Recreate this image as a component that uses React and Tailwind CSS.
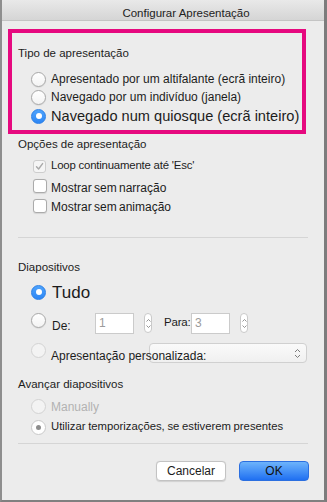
import React from "react";

function Radio({ v = "off", className = "" }) {
  if (v === "on")
    return (
      <div className={`w-[15px] h-[15px] shrink-0 rounded-full bg-linear-to-b from-[#4ea3fc] to-[#2d86f4] border border-[#2a7fe6] flex items-center justify-center ${className}`}>
        <div className="w-[6px] h-[6px] rounded-full bg-white" />
      </div>
    );
  if (v === "dis")
    return <div className={`w-[15px] h-[15px] shrink-0 rounded-full border border-[#d3d3d3] bg-[#f3f3f3] ${className}`} />;
  if (v === "dison")
    return (
      <div className={`w-[15px] h-[15px] shrink-0 rounded-full border border-[#c9c9c9] bg-white flex items-center justify-center ${className}`}>
        <div className="w-[5px] h-[5px] rounded-full bg-[#8d8d8d]" />
      </div>
    );
  return (
    <div className={`w-[15px] h-[15px] shrink-0 rounded-full border border-[#a8a8a8] bg-linear-to-b from-white to-[#f3f3f3] shadow-[0_0.5px_1px_rgba(0,0,0,0.12)] ${className}`} />
  );
}

function Check({ checked }) {
  if (checked)
    return (
      <div className="w-[13px] h-[13px] shrink-0 rounded-[3px] border border-[#cdcdcd] bg-[#f5f5f5] flex items-center justify-center">
        <svg width="9" height="9" viewBox="0 0 9 9">
          <path d="M1.5 4.8 L3.6 7 L7.6 1.6" fill="none" stroke="#a9a9a9" strokeWidth="1.4" strokeLinecap="round" strokeLinejoin="round" />
        </svg>
      </div>
    );
  return <div className="w-[14px] h-[14px] shrink-0 rounded-[3px] border border-[#ababab] bg-white shadow-[0_0.5px_1px_rgba(0,0,0,0.1)]" />;
}

function Stepper() {
  return (
    <div className="w-[8px] h-[20px] shrink-0 rounded-full border border-[#cacaca] bg-white flex flex-col items-center justify-center gap-[3px]">
      <svg width="5" height="3" viewBox="0 0 5 3">
        <path d="M0.5 2.5 L2.5 0.5 L4.5 2.5" fill="none" stroke="#7a7a7a" strokeWidth="0.8" />
      </svg>
      <svg width="5" height="3" viewBox="0 0 5 3">
        <path d="M0.5 0.5 L2.5 2.5 L4.5 0.5" fill="none" stroke="#7a7a7a" strokeWidth="0.8" />
      </svg>
    </div>
  );
}

function Field({ value }) {
  return (
    <div className="w-[39px] h-[21px] shrink-0 bg-white border border-[#cbcbcb] flex items-center pl-[3px] text-[12px] text-[#9b9b9b]">
      {value}
    </div>
  );
}

function Sep({ className = "" }) {
  return <div className={`ml-[16px] w-[290px] h-px bg-[#d5d5d5] ${className}`} />;
}

export default function App() {
  return (
    <div className="w-[327px] h-[502px] bg-[#ececec] border-l-2 border-r-[3px] border-b-2 border-l-[#8e8e8e] border-r-[#7c7c7c] border-b-[#808080] flex flex-col font-['Liberation_Sans',Arial,sans-serif] text-[#1c1c1c] leading-none overflow-hidden whitespace-nowrap">
      {/* title bar */}
      <div className="h-[21px] shrink-0 bg-linear-to-b from-[#e9e9e9] to-[#d5d5d5] border-b border-[#c4c4c4] flex justify-center pl-[46px] pt-[8px] text-[11.5px] text-[#222]">
        Configurar Apresentação
      </div>

      {/* pink highlighted box */}
      <div className="mt-[8px] ml-[6px] w-[298px] h-[105px] shrink-0 border-4 border-[#e6097f] flex flex-col">
        <div className="h-[18px] mt-[12px] pl-[6px] flex items-center text-[11.5px]">Tipo de apresentação</div>
        <div className="h-[18px] mt-[7px] pl-[19px] flex items-center">
          <Radio />
          <span className="ml-[5px] text-[12px]">Apresentado por um altifalante (ecrã inteiro)</span>
        </div>
        <div className="h-[18px] pl-[19px] flex items-center">
          <Radio />
          <span className="ml-[5px] text-[12px]">Navegado por um indivíduo (janela)</span>
        </div>
        <div className="h-[20px] pl-[19px] flex items-center">
          <Radio v="on" />
          <span className="ml-[5px] text-[14.6px]">Navegado num quiosque (ecrã inteiro)</span>
        </div>
      </div>

      {/* options */}
      <div className="h-[18px] mt-[2px] pl-[16px] flex items-center text-[11.5px]">Opções de apresentação</div>
      <div className="h-[20px] mt-[2px] pl-[31px] flex items-center">
        <Check checked />
        <span className="ml-[5px] text-[11.4px] tracking-[-0.2px]">Loop continuamente até 'Esc'</span>
      </div>
      <div className="h-[20px] pl-[31px] flex items-center">
        <Check />
        <span className="ml-[4px] mt-[3px] text-[12px] [word-spacing:-1px]">Mostrar sem narração</span>
      </div>
      <div className="h-[19px] pl-[31px] flex items-center">
        <Check />
        <span className="ml-[4px] mt-[3px] text-[12px] [word-spacing:-1px]">Mostrar sem animação</span>
      </div>

      <Sep className="mt-[22px]" />

      {/* slides */}
      <div className="h-[18px] mt-[21px] pl-[16px] flex items-center text-[11.5px]">Diapositivos</div>
      <div className="h-[22px] mt-[4px] pl-[29px] flex items-center">
        <Radio v="on" />
        <span className="ml-[6px] text-[17px]">Tudo</span>
      </div>
      <div className="h-[26px] mt-[7px] pl-[29px] flex items-center">
        <Radio className="mb-[6px]" />
        <span className="ml-[6px] mt-[5px] w-[43px] shrink-0 text-[12px]">De:</span>
        <Field value="1" />
        <div className="ml-[10px]"><Stepper /></div>
        <span className="ml-[12px] w-[27px] shrink-0 text-[11.5px] tracking-[-0.2px]">Para:</span>
        <Field value="3" />
        <div className="ml-[10px]"><Stepper /></div>
      </div>
      <div className="h-[26px] mt-[4px] pl-[29px] flex items-center">
        <Radio v="dis" className="mb-[6px]" />
        <span className="relative z-10 ml-[5px] mt-[5px] w-[98px] shrink-0 text-[12px]">Apresentação personalizada:</span>
        <div className="w-[158px] h-[20px] shrink-0 rounded-[4px] border border-[#d0d0d0] bg-linear-to-b from-[#fafafa] to-[#f0f0f0] flex items-center justify-end pr-[5px]">
          <svg width="7" height="11" viewBox="0 0 7 11">
            <path d="M1 4 L3.5 1.5 L6 4 M1 7 L3.5 9.5 L6 7" fill="none" stroke="#6f6f6f" strokeWidth="0.9" />
          </svg>
        </div>
      </div>

      {/* advance */}
      <div className="h-[18px] mt-[10px] pl-[16px] flex items-center text-[11.5px]">Avançar diapositivos</div>
      <div className="h-[19px] mt-[3px] pl-[29px] flex items-center">
        <Radio v="dis" />
        <span className="ml-[5px] text-[12px] text-[#b2b2b2]">Manually</span>
      </div>
      <div className="h-[20px] mt-[1px] pl-[29px] flex items-center">
        <Radio v="dison" />
        <span className="ml-[5px] text-[11.3px] [word-spacing:-0.5px]">Utilizar temporizações, se estiverem presentes</span>
      </div>

      <Sep className="mt-[6px]" />

      {/* buttons */}
      <div className="mt-[17px] pr-[15px] flex justify-end gap-[13px]">
        <div className="w-[70px] h-[20px] rounded-[4px] bg-white border border-[#c3c3c3] shadow-[0_0.5px_1px_rgba(0,0,0,0.12)] flex items-center justify-center text-[12px]">
          Cancelar
        </div>
        <div className="w-[70px] h-[20px] rounded-[4px] bg-linear-to-b from-[#6db3fb] to-[#1f6ff1] border border-[#2b6fe0] flex items-center justify-center text-[12px] text-[#111]">
          OK
        </div>
      </div>
    </div>
  );
}
